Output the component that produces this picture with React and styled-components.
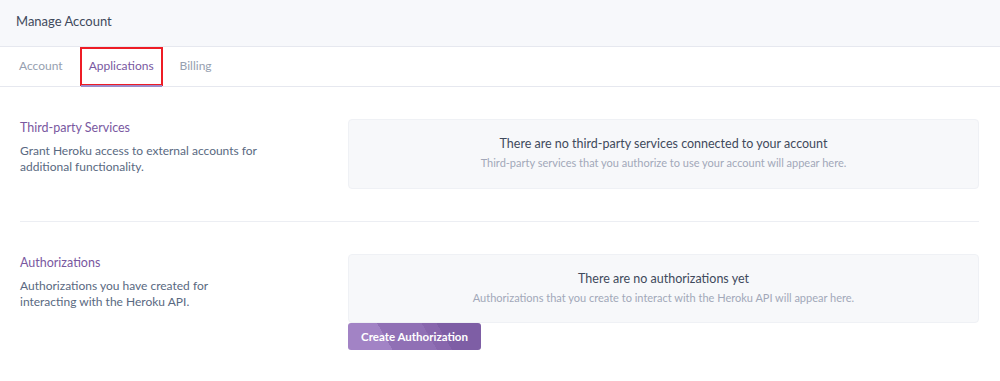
import React from "react";
import styled, { createGlobalStyle } from "styled-components";

const Global = createGlobalStyle`
  html, body { margin: 0; padding: 0; background: #fff; }
  body { font-family: Lato, "Noto Sans", sans-serif; -webkit-font-smoothing: antialiased; }
  * { box-sizing: border-box; }
`;

const Page = styled.div`
  width: 1000px;
  min-height: 381px;
  background: #fff;
`;

const Header = styled.header`
  height: 47px;
  background: #f7f8fb;
  border-bottom: 1px solid #e6e8ef;
  display: flex;
  align-items: center;
  padding: 0 0 4px 16px;
  font-size: 13px;
  color: #3f4a5c;
`;

const Tabs = styled.nav`
  height: 40px;
  border-bottom: 1px solid #e6e8ef;
  display: flex;
  align-items: stretch;
  gap: 9px;
  padding-left: 11px;
`;

const Tab = styled.a`
  display: flex;
  align-items: center;
  padding: 0 ${(p) => (p.$active ? "9px" : "8px")} 2px;
  font-size: 12px;
  color: ${(p) => (p.$active ? "#79589f" : "#96a0b0")};
  text-decoration: none;
  position: relative;
  ${(p) =>
    p.$active &&
    `
    outline: 2px solid #ee1c25;
    outline-offset: -2px;
    &::after {
      content: "";
      position: absolute;
      left: 1px; right: 1px; bottom: -1px;
      height: 2px;
      background: #9d8ac9;
    }
  `}
`;

const Content = styled.main`
  padding: 32px 21px 0 20px;
`;

const Section = styled.section`
  display: grid;
  grid-template-columns: 328px 1fr;
  padding-bottom: 32px;
  & + & {
    border-top: 1px solid #eceef3;
    padding-top: 32px;
  }
`;

const Intro = styled.div`
  width: 240px;
`;

const Title = styled.h3`
  margin: 0 0 6px;
  font-size: 12.5px;
  line-height: 18px;
  font-weight: 400;
  color: #79589f;
`;

const Desc = styled.p`
  margin: 0;
  font-size: 12px;
  line-height: 16px;
  color: #596981;
`;

const Body = styled.div`
  display: flex;
  flex-direction: column;
  align-items: flex-start;
`;

const Empty = styled.div`
  width: 100%;
  background: #f7f8fa;
  border: 1px solid #eff1f5;
  border-radius: 4px;
  padding: ${(p) => (p.$compact ? "15px 16px 16px" : "15px 16px 17px")};
  text-align: center;
`;

const EmptyTitle = styled.div`
  font-size: 12.5px;
  line-height: 18px;
  color: #3f4a5c;
`;

const EmptyText = styled.div`
  margin-top: 2px;
  font-size: 11px;
  line-height: 16px;
  color: #a2a8b9;
`;

const Button = styled.button`
  margin-top: 0;
  height: 27px;
  width: 133px;
  border: 0;
  border-radius: 3px;
  color: #fff;
  font-family: inherit;
  font-size: 11.5px;
  font-weight: 700;
  cursor: pointer;
  background: linear-gradient(
    60deg,
    #a283c5 0%,
    #a283c5 30%,
    #9070b5 30%,
    #9070b5 60%,
    #8866ad 60%,
    #8866ad 70%,
    #7e5ea5 70%,
    #7e5ea5 100%
  );
`;

export default function App() {
  return (
    <Page>
      <Global />
      <Header>Manage Account</Header>
      <Tabs>
        <Tab>Account</Tab>
        <Tab $active>Applications</Tab>
        <Tab>Billing</Tab>
      </Tabs>
      <Content>
        <Section>
          <Intro>
            <Title>Third-party Services</Title>
            <Desc>Grant Heroku access to external accounts for additional functionality.</Desc>
          </Intro>
          <Body>
            <Empty>
              <EmptyTitle>There are no third-party services connected to your account</EmptyTitle>
              <EmptyText>Third-party services that you authorize to use your account will appear here.</EmptyText>
            </Empty>
          </Body>
        </Section>
        <Section>
          <Intro>
            <Title>Authorizations</Title>
            <Desc>Authorizations you have created for interacting with the Heroku API.</Desc>
          </Intro>
          <Body>
            <Empty $compact>
              <EmptyTitle>There are no authorizations yet</EmptyTitle>
              <EmptyText>Authorizations that you create to interact with the Heroku API will appear here.</EmptyText>
            </Empty>
            <Button>Create Authorization</Button>
          </Body>
        </Section>
      </Content>
    </Page>
  );
}
